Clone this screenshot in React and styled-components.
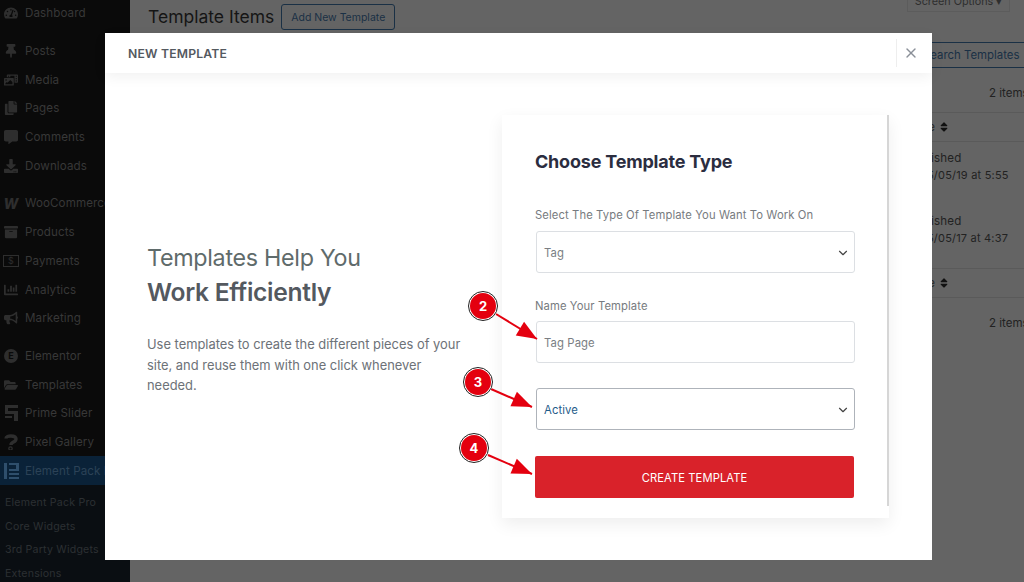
import React from 'react'
import styled, { createGlobalStyle } from 'styled-components'
import {
  FaTachometerAlt, FaThumbtack, FaPhotoVideo, FaCopy, FaCommentAlt, FaDownload,
  FaArchive, FaChartBar, FaBullhorn, FaFolderOpen, FaSort,
} from 'react-icons/fa'
import { ChevronDown, X } from 'lucide-react'

const GlobalStyle = createGlobalStyle`
  html, body {
    margin: 0;
    height: 100%;
    overflow: hidden;
    background: #646464;
    font-family: Inter, "Liberation Sans", sans-serif;
  }
  * { box-sizing: border-box; }
`

const Page = styled.div`
  position: relative;
  display: flex;
  width: 1024px;
  height: 582px;
  overflow: hidden;
  background: #646464;
`

const Sidebar = styled.nav`
  width: 130px;
  flex-shrink: 0;
  background: #0a0a0a;
  overflow: hidden;
`

const SidebarInner = styled.div`
  margin-top: -1px;
`

const MenuGroup = styled.div`
  margin-bottom: ${p => (p.$last ? 0 : 9)}px;
`

const MenuItem = styled.div`
  display: flex;
  align-items: center;
  height: 28.7px;
  padding-left: 3px;
  white-space: nowrap;
  font-size: 11.6px;
  letter-spacing: 0.1px;
  color: ${p => (p.$active ? '#2c4257' : '#383838')};
  background: ${p => (p.$active ? '#0a2238' : 'transparent')};
`

const MenuIcon = styled.span`
  display: flex;
  align-items: center;
  justify-content: center;
  width: 16px;
  height: 16px;
  margin-right: 6px;
  color: #2e2e2e;
  font-size: 14px;
`

const WooMark = styled.span`
  font-size: 14px;
  font-weight: 800;
  font-style: italic;
`

const DollarBox = styled.span`
  display: flex;
  align-items: center;
  justify-content: center;
  width: 16px;
  height: 12px;
  border: 1px solid #2e2e2e;
  font-size: 9px;
`

const ElementorDot = styled.span`
  display: flex;
  align-items: center;
  justify-content: center;
  width: 14px;
  height: 14px;
  border-radius: 50%;
  background: #2e2e2e;
  color: #0a0a0a;
  font-size: 9px;
  font-weight: 700;
`

const SubMenu = styled.div`
  background: #0a0e12;
  padding-top: 6px;
`

const SubItem = styled.div`
  height: 23.5px;
  line-height: 23.5px;
  padding-left: 5px;
  white-space: nowrap;
  font-size: 10.6px;
  letter-spacing: 0.2px;
  color: #2c3033;
`

const Main = styled.main`
  flex: 1;
  display: flex;
  justify-content: space-between;
  padding-left: 18px;
`

const TitleRow = styled.div`
  display: flex;
  align-items: flex-start;
  gap: 7px;
  height: 33px;
`

const PageTitle = styled.h1`
  margin: 4px 0 0;
  font-size: 17.5px;
  line-height: 26px;
  font-weight: 400;
  color: #151515;
`

const OutlineButton = styled.div`
  height: 26px;
  padding: 0 9px;
  line-height: 25px;
  margin-top: 4px;
  border: 1px solid #1a3045;
  border-radius: 3px;
  font-size: 10.5px;
  white-space: nowrap;
  color: #1a3045;
`

const RightColumn = styled.div`
  width: 118px;
  flex-shrink: 0;
  color: #222;
  font-size: 11.5px;
`

const ScreenOptions = styled.div`
  width: 103px;
  height: 12px;
  margin-left: 1px;
  padding-top: 2px;
  border: 1px solid #5c5c5c;
  border-top: 0;
  color: #2e2e2e;
  font-size: 10.8px;
  line-height: 0;
  text-align: center;
  white-space: nowrap;
`

const SearchButton = styled.div`
  height: 26px;
  margin-top: 30px;
  border: 1px solid #1a3045;
  border-right: 0;
  line-height: 24px;
  padding-left: 16px;
  font-size: 11.4px;
  white-space: nowrap;
  color: #1a3045;
`

const ItemCount = styled.div`
  height: 44px;
  padding-top: 18px;
  padding-left: 83px;
  line-height: 14px;
  white-space: nowrap;
  overflow: hidden;
`

const HeadCell = styled.div`
  display: flex;
  align-items: center;
  height: 30px;
  padding-left: 5px;
  border-top: 1px solid #5a5a5a;
  border-bottom: 1px solid #5a5a5a;
  font-size: 11px;
  color: #222;
  svg { margin-left: 3px; color: #111; font-size: 12px; }
`

const DateCell = styled.div`
  height: 63px;
  padding: 8px 0 0;
  line-height: 16.5px;
  white-space: nowrap;
  font-size: 11px;
  letter-spacing: 0.2px;
`

const DateStatus = styled.span`
  display: block;
  font-size: 11.6px;
`

const Modal = styled.section`
  position: absolute;
  left: 105px;
  top: 33px;
  display: flex;
  flex-direction: column;
  width: 827px;
  height: 527px;
  background: #fff;
`

const ModalHeader = styled.header`
  display: flex;
  align-items: center;
  justify-content: space-between;
  height: 40px;
  flex-shrink: 0;
  padding-left: 23px;
  box-shadow: 0 4px 14px rgba(0, 0, 0, 0.06);
`

const ModalTitle = styled.h2`
  margin: 0;
  font-size: 12.2px;
  font-weight: 600;
  color: #54595f;
  letter-spacing: 0.2px;
`

const CloseBox = styled.div`
  display: flex;
  align-items: center;
  width: 36px;
  height: 28px;
  padding-left: 6px;
  border-left: 1px solid #eee;
  color: #8a8f98;
`

const ModalBody = styled.div`
  flex: 1;
  display: flex;
  padding: 42px 43px 42px 42px;
`

const Intro = styled.div`
  width: 355px;
  flex-shrink: 0;
  padding-top: 125px;
`

const IntroHeading = styled.h3`
  margin: 0;
  font-size: 23.3px;
  line-height: 35px;
  font-weight: 400;
  letter-spacing: -0.3px;
  color: #5f6b6b;
`

const IntroStrong = styled.strong`
  display: block;
  font-size: 24.6px;
  font-weight: 600;
  color: #54595f;
`

const IntroText = styled.p`
  margin: 25px 0 0;
  width: 320px;
  font-size: 12.9px;
  line-height: 20.5px;
  color: #6d7278;
`

const Card = styled.div`
  position: relative;
  flex: 1;
  padding: 36px 34px 0 33px;
  background: #fff;
  box-shadow: 0 6px 16px rgba(0, 0, 0, 0.07);
  &::after {
    content: '';
    position: absolute;
    top: 0;
    right: 0;
    bottom: 12px;
    width: 2px;
    background: #d6d6d6;
  }
`

const CardTitle = styled.h4`
  margin: 0 0 34px;
  font-size: 18px;
  line-height: 22px;
  font-weight: 700;
  letter-spacing: -0.2px;
  color: #2b2d3f;
`

const Label = styled.label`
  display: block;
  margin-bottom: ${p => p.$gap}px;
  font-size: 11.25px;
  line-height: 16px;
  letter-spacing: 0.1px;
  color: #777b80;
`

const Field = styled.div`
  display: flex;
  align-items: center;
  justify-content: space-between;
  width: 319px;
  height: 42px;
  margin-left: 1px;
  margin-bottom: ${p => p.$gap}px;
  padding: 1px 4px 0 7px;
  background: #fff;
  border: 1px solid ${p => (p.$strong ? '#aeb3ba' : '#dcdfe3')};
  border-radius: 3px;
  font-size: 11.3px;
  letter-spacing: 0.1px;
  color: ${p => (p.$strong ? '#1f5c8a' : '#7a7e83')};
  svg { color: #444; }
`

const SubmitButton = styled.button`
  display: block;
  width: 319px;
  height: 42px;
  padding: 1px 0 0;
  border: 0;
  border-radius: 2px;
  background: #d9222a;
  color: #fff;
  font: 400 11.2px Inter, "Liberation Sans", sans-serif;
  letter-spacing: 0.1px;
`

const Badge = styled.div`
  position: absolute;
  left: ${p => p.$x - 15}px;
  top: ${p => p.$y - 15}px;
  display: flex;
  align-items: center;
  justify-content: center;
  width: 30px;
  height: 30px;
  border-radius: 50%;
  background: #e4000f;
  border: 2px solid #fff;
  outline: 1.5px solid #222;
  outline-offset: -1px;
  color: #fff;
  font-size: 13px;
  font-weight: 700;
`

const ArrowLayer = styled.svg`
  position: absolute;
  left: 0;
  top: 0;
  pointer-events: none;
`

const arrows = [
  { n: 2, x: 483, y: 306, x1: 496, y1: 314, x2: 537, y2: 339 },
  { n: 3, x: 478, y: 382, x1: 491, y1: 389, x2: 532, y2: 407 },
  { n: 4, x: 474, y: 448, x1: 488, y1: 455, x2: 532, y2: 474 },
]

const arrowHead = (a, len = 20, half = 8) => {
  const dx = a.x2 - a.x1
  const dy = a.y2 - a.y1
  const d = Math.hypot(dx, dy)
  const ux = dx / d
  const uy = dy / d
  const bx = a.x2 - ux * len
  const by = a.y2 - uy * len
  return `${a.x2},${a.y2} ${bx - uy * half},${by + ux * half} ${bx + uy * half},${by - ux * half}`
}

const PrimeSliderIcon = () => (
  <svg width="15" height="16" viewBox="0 0 15 16" fill="#2e2e2e">
    <path d="M1 0h13v3H4v3h10v10h-4v-7H1V0z" />
    <path d="M1 11h7v2H1z" />
  </svg>
)

const PixelIcon = () => (
  <svg width="14" height="16" viewBox="0 0 14 16" fill="none" stroke="#2e2e2e" strokeWidth="3.4">
    <path d="M2 4.5C2 1 12 1 12 5c0 3.6-5 2.6-5 6" />
    <circle cx="6.5" cy="14.5" r="0.6" />
  </svg>
)

const PackIcon = () => (
  <svg width="15" height="16" viewBox="0 0 15 16" fill="#2f4f6c">
    <path d="M0 0h3v16H0zM5 0h10v8H5V6h7V2H5zM5 10h10v2H5zM5 14h10v2H5z" />
  </svg>
)

const groups = [
  [['Dashboard', <FaTachometerAlt />]],
  [
    ['Posts', <FaThumbtack />],
    ['Media', <FaPhotoVideo />],
    ['Pages', <FaCopy />],
    ['Comments', <FaCommentAlt />],
    ['Downloads', <FaDownload />],
  ],
  [
    ['WooCommerce', <WooMark>W</WooMark>],
    ['Products', <FaArchive />],
    ['Payments', <DollarBox>$</DollarBox>],
    ['Analytics', <FaChartBar />],
    ['Marketing', <FaBullhorn />],
  ],
  [
    ['Elementor', <ElementorDot>E</ElementorDot>],
    ['Templates', <FaFolderOpen />],
    ['Prime Slider', <PrimeSliderIcon />],
    ['Pixel Gallery', <PixelIcon />],
  ],
]

const App = () => (
  <Page>
    <GlobalStyle />
    <Sidebar>
      <SidebarInner>
        {groups.map((group, i) => (
          <MenuGroup key={i} $last={i === groups.length - 1}>
            {group.map(([label, icon]) => (
              <MenuItem key={label}>
                <MenuIcon>{icon}</MenuIcon>
                {label}
              </MenuItem>
            ))}
          </MenuGroup>
        ))}
        <MenuItem $active>
          <MenuIcon><PackIcon /></MenuIcon>
          Element Pack Pro
        </MenuItem>
        <SubMenu>
          <SubItem>Element Pack Pro</SubItem>
          <SubItem>Core Widgets</SubItem>
          <SubItem>3rd Party Widgets</SubItem>
          <SubItem>Extensions</SubItem>
        </SubMenu>
      </SidebarInner>
    </Sidebar>

    <Main>
      <TitleRow>
        <PageTitle>Template Items</PageTitle>
        <OutlineButton>Add New Template</OutlineButton>
      </TitleRow>
      <RightColumn>
        <ScreenOptions>Screen Options ▾</ScreenOptions>
        <SearchButton>Search Templates</SearchButton>
        <ItemCount>2 items</ItemCount>
        <HeadCell>Date <FaSort /></HeadCell>
        <DateCell><DateStatus>Published</DateStatus>2025/05/19 at 5:55</DateCell>
        <DateCell><DateStatus>Published</DateStatus>2025/05/17 at 4:37</DateCell>
        <HeadCell>Date <FaSort /></HeadCell>
        <ItemCount>2 items</ItemCount>
      </RightColumn>
    </Main>

    <Modal>
      <ModalHeader>
        <ModalTitle>NEW TEMPLATE</ModalTitle>
        <CloseBox><X size={16} /></CloseBox>
      </ModalHeader>
      <ModalBody>
        <Intro>
          <IntroHeading>
            Templates Help You
            <IntroStrong>Work Efficiently</IntroStrong>
          </IntroHeading>
          <IntroText>
            Use templates to create the different pieces of your site, and reuse them with one click whenever needed.
          </IntroText>
        </Intro>
        <Card>
          <CardTitle>Choose Template Type</CardTitle>
          <Label $gap={8}>Select The Type Of Template You Want To Work On</Label>
          <Field $gap={25}>Tag<ChevronDown size={14} /></Field>
          <Label $gap={7}>Name Your Template</Label>
          <Field $gap={25}>Tag Page</Field>
          <Field $gap={26} $strong>Active<ChevronDown size={14} /></Field>
          <SubmitButton>CREATE TEMPLATE</SubmitButton>
        </Card>
      </ModalBody>
    </Modal>

    <ArrowLayer width="1024" height="582" viewBox="0 0 1024 582">
      {arrows.map(a => (
        <g key={a.n}>
          <line x1={a.x1} y1={a.y1} x2={a.x2} y2={a.y2} stroke="#e4000f" strokeWidth="2" />
          <polygon points={arrowHead(a)} fill="#e4000f" />
        </g>
      ))}
    </ArrowLayer>
    {arrows.map(a => (
      <Badge key={a.n} $x={a.x} $y={a.y}>{a.n}</Badge>
    ))}
  </Page>
)

export default App
